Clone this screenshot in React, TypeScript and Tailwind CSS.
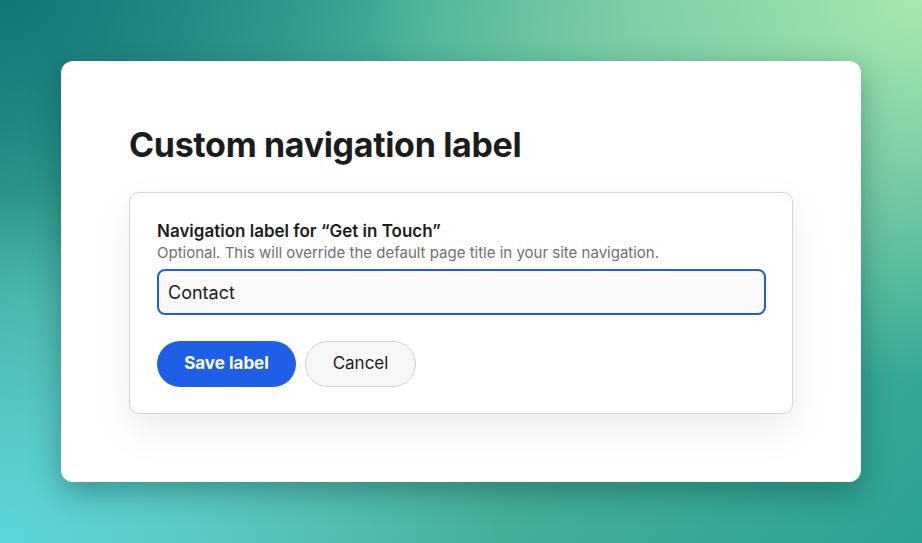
import { useState } from "react"

export default function App() {
  const [value, setValue] = useState("Contact")

  return (
    <div className="min-h-screen w-full bg-[radial-gradient(ellipse_60%_70%_at_100%_0%,#a9e7b0_0%,rgba(169,231,176,0)_100%),radial-gradient(ellipse_55%_65%_at_0%_100%,#5cd6dd_0%,rgba(92,214,221,0)_100%),radial-gradient(ellipse_45%_55%_at_0%_0%,#137676_0%,rgba(19,118,118,0)_100%),linear-gradient(135deg,#2a9c92_0%,#56b99c_45%,#2aa394_100%)] pt-[61px] pl-[61px] font-['Inter','Liberation_Sans',sans-serif]">
      <div className="w-[800px] h-[421px] rounded-xl bg-white shadow-[0_10px_30px_rgba(0,40,40,0.35)] px-[68px] pt-[62px]">
        <h1 className="text-[34px] leading-[44px] font-bold tracking-[-0.01em] text-[#1c1c1c]">
          Custom navigation label
        </h1>

        {/* Form card */}
        <div className="mt-[25px] w-[664px] rounded-[10px] border border-[#d6d6d6] bg-white px-[27px] pt-[28px] pb-[26px] shadow-[0_16px_40px_rgba(0,0,0,0.08)]">
          <label htmlFor="nav-label" className="block text-[17px] leading-[21px] font-semibold text-[#1c1c1c]">
            Navigation label for “Get in Touch”
          </label>
          <p className="mt-[1px] text-[15px] leading-[20px] text-[#6f6f6f]">
            Optional. This will override the default page title in your site navigation.
          </p>
          <input
            id="nav-label"
            value={value}
            onChange={(e) => setValue(e.target.value)}
            className="mt-[6px] block w-[609px] h-[46px] rounded-lg border-2 border-[#1f5ce3] bg-[#f9f9f9] px-[9px] text-[18px] text-[#1c1c1c] outline-none"
          />
          <div className="mt-[26px] flex gap-[9px]">
            <button className="h-[46px] w-[139px] rounded-full bg-[#1f5ee6] text-[17px] font-bold text-white">
              Save label
            </button>
            <button className="h-[46px] w-[111px] rounded-full border border-[#cfcfcf] bg-[#f7f7f7] text-[17px] text-[#1c1c1c]">
              Cancel
            </button>
          </div>
        </div>
      </div>
    </div>
  )
}
